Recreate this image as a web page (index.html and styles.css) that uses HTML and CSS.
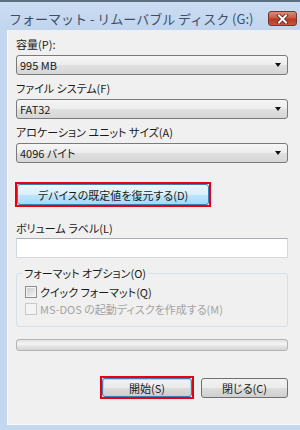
FILE: index.html
```html
<!DOCTYPE html>
<html lang="ja">
<head>
    <meta charset="UTF-8">
    <title>フォーマット - リムーバブル ディスク (G:)</title>
    <link rel="stylesheet" href="styles.css">
</head>
<body>

    <div class="window">
        <!-- Title bar -->
        <div class="titlebar">
            <span class="title">フォーマット - リムーバブル ディスク (G:)</span>
            <span class="close-btn">
                <svg width="13" height="10" viewBox="0 0 13 10">
                    <path d="M3 1.5 L10 8.5 M10 1.5 L3 8.5" stroke="#5a1f16" stroke-width="3.6" stroke-linecap="square"/>
                    <path d="M3 1.5 L10 8.5 M10 1.5 L3 8.5" stroke="#fff" stroke-width="2" stroke-linecap="square"/>
                </svg>
            </span>
        </div>

        <div class="client">
            <div class="field-label">容量(P):</div>
            <div class="combo"><span>995 MB</span><span class="arrow"></span></div>

            <div class="field-label spaced">ファイル システム(F)</div>
            <div class="combo"><span>FAT32</span><span class="arrow"></span></div>

            <div class="field-label spaced">アロケーション ユニット サイズ(A)</div>
            <div class="combo"><span>4096 バイト</span><span class="arrow"></span></div>

            <div class="mark restore-mark">
                <div class="btn btn-focus restore-btn">デバイスの既定値を復元する(D)</div>
            </div>

            <div class="field-label volume-label">ボリューム ラベル(L)</div>
            <div class="textbox"></div>

            <fieldset class="group">
                <legend>フォーマット オプション(O)</legend>
                <div class="check-row">
                    <span class="checkbox"></span>クイック フォーマット(Q)
                </div>
                <div class="check-row disabled">
                    <span class="checkbox"></span>MS-DOS の起動ディスクを作成する(M)
                </div>
            </fieldset>

            <div class="progress"></div>

            <div class="button-row">
                <div class="mark">
                    <div class="btn btn-default start-btn">開始(S)</div>
                </div>
                <div class="btn close-dialog-btn">閉じる(C)</div>
            </div>
        </div>
    </div>

</body>
</html>
```

FILE: styles.css
```css
/* Global Styles */
body {
    margin: 0;
    font-family: "Noto Sans CJK JP", sans-serif;
    font-size: 11px;
    color: #1a1a1a;
    font-feature-settings: "palt";
}

.window {
    width: 300px;
    height: 430px;
    box-sizing: border-box;
    background-color: #c3d7ef;
    border-top: 2px solid #5f6d80;
    padding-bottom: 5px;
    display: flex;
    flex-direction: column;
}

/* Title bar */
.titlebar {
    height: 28px;
    box-sizing: border-box;
    padding: 5px 3px 0 9px;
    display: flex;
    align-items: center;
    justify-content: space-between;
    background: linear-gradient(#cadcf2, #c1d5ee);
}

.title {
    font-size: 13px;
    color: #3c4e68;
    line-height: 16px;
    font-feature-settings: normal;
}

.close-btn {
    width: 29px;
    height: 15px;
    box-sizing: border-box;
    border: 1px solid #76342a;
    border-radius: 3px;
    background: linear-gradient(#dc8b7a, #c85a45 45%, #b43a26 55%, #c9553c);
    display: flex;
    align-items: center;
    justify-content: center;
}

/* Client area */
.client {
    flex: 1;
    margin-left: 7px;
    border-left: 1px solid #f7f9fc;
    border-bottom: 1px solid #f7f9fc;
    background-color: #f0f0f0;
    padding: 7px 12px 0 8px;
    display: flex;
    flex-direction: column;
}

.field-label {
    height: 14px;
    line-height: 14px;
    margin-bottom: 4px;
}

.field-label.spaced {
    margin-top: 6px;
}

.combo {
    height: 20px;
    box-sizing: border-box;
    border: 1px solid #7a7a7a;
    border-radius: 3px;
    background: linear-gradient(#f6f6f6, #ececec 50%, #e0e0e0 51%, #d6d6d6);
    display: flex;
    align-items: center;
    justify-content: space-between;
    padding: 0 6px 0 3px;
    line-height: 16px;
}

.arrow {
    width: 0;
    height: 0;
    border-left: 3.5px solid transparent;
    border-right: 3.5px solid transparent;
    border-top: 4px solid #111;
}

/* Red annotation box */
.mark {
    border: 2px solid #e60012;
    display: flex;
}

.restore-mark {
    align-self: flex-start;
    margin-top: 19px;
    margin-left: -1px;
}

/* Buttons */
.btn {
    box-sizing: border-box;
    border: 1px solid #707070;
    border-radius: 3px;
    background: linear-gradient(#f2f2f2, #ebebeb 50%, #dddddd 51%, #cfcfcf);
    display: flex;
    align-items: center;
    justify-content: center;
    line-height: 14px;
}

.btn-focus {
    border-color: #3c7fb1;
    background: linear-gradient(#eaf6fd, #d9f0fc 50%, #bee6fd 51%, #a7d9f5);
}

.btn-default {
    border-color: #3c7fb1;
    box-shadow: inset 0 0 0 1px #9ee0f0;
}

.restore-btn {
    width: 192px;
    height: 21px;
}

.volume-label {
    margin-top: 14px;
    margin-bottom: 3px;
}

.textbox {
    height: 20px;
    box-sizing: border-box;
    background-color: #fff;
    border: 1px solid #d5d8dd;
    border-top-color: #abadb3;
}

/* Format options group */
.group {
    margin: 8px 0 0;
    padding: 0 0 10px 5px;
    border: 1px solid #d5dfe5;
    border-radius: 3px;
}

.group legend {
    padding: 0 2px;
    line-height: 14px;
}

.check-row {
    display: flex;
    align-items: center;
    height: 14px;
    line-height: 14px;
    margin: 5px 0 0 3px;
}

.check-row + .check-row {
    margin-top: 3px;
}

.checkbox {
    width: 12px;
    height: 12px;
    box-sizing: border-box;
    border: 1px solid #8e8f8f;
    background: linear-gradient(135deg, #cbcbcb, #f5f5f5);
    box-shadow: inset 0 0 0 1px #f4f4f4;
    margin-right: 3px;
}

.check-row.disabled {
    color: #a3a3a3;
}

.check-row.disabled .checkbox {
    border-color: #c9c9c9;
    background: #f4f4f4;
}

/* Progress bar */
.progress {
    margin-top: 12px;
    height: 12px;
    box-sizing: border-box;
    border: 1px solid #b4b4b4;
    border-radius: 3px;
    background: linear-gradient(#e2e2e2, #f4f4f4 40%, #e6e6e6 60%, #d4d4d4);
}

/* Bottom buttons */
.button-row {
    margin-top: 25px;
    display: flex;
    justify-content: flex-end;
    align-items: center;
    gap: 7px;
}

.start-btn {
    width: 90px;
    height: 19px;
}

.close-dialog-btn {
    width: 87px;
    height: 20px;
}
```
